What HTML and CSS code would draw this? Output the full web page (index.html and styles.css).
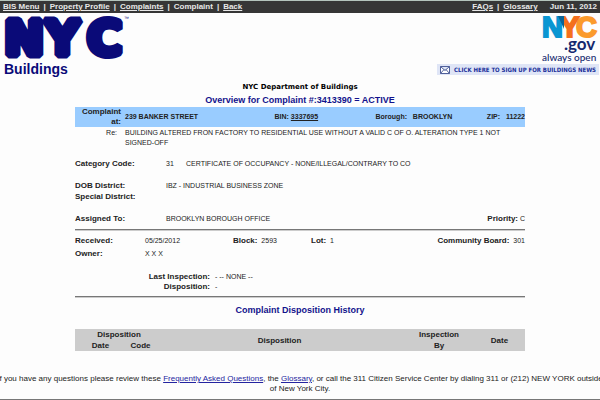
FILE: index.html
```html
<!DOCTYPE html>
<html lang="en">
<head>
    <meta charset="UTF-8">
    <meta name="viewport" content="width=device-width, initial-scale=1.0">
    <title>Overview for Complaint</title>
    <link rel="stylesheet" href="styles.css">
</head>
<body>

    <!-- Top navigation -->
    <nav class="topbar">
        <div class="links">
            <a href="#">BIS Menu</a><span>|</span><a href="#">Property Profile</a><span>|</span><a href="#">Complaints</a><span>|</span>Complaint<span>|</span><a href="#">Back</a>
        </div>
        <div class="links">
            <a href="#">FAQs</a><span>|</span><a href="#">Glossary</a>
            <time class="today">Jun 11, 2012</time>
        </div>
    </nav>

    <header class="banner">
        <svg class="logo" width="130" height="64" viewBox="0 0 130 64" role="img" aria-label="NYC Buildings">
            <text class="logo-nyc" y="40"><tspan x="2">N</tspan><tspan x="43">Y</tspan><tspan x="85">C</tspan></text>
            <text class="logo-tm" x="122" y="5">™</text>
            <text class="logo-dept" x="2" y="59">Buildings</text>
        </svg>
        <div class="banner-right">
            <svg class="gov" width="58" height="49" viewBox="0 0 58 49" role="img" aria-label="NYC.gov always open">
                <text class="gov-nyc" y="22"><tspan class="n" x="1">N</tspan><tspan class="c" x="35">C</tspan><tspan class="y" x="19">Y</tspan></text>
                <polygon class="fold" points="17,1 23,1 23,14" />
                <text class="gov-name" x="23" y="35">.gov</text>
                <text class="gov-open" x="1" y="46">always open</text>
            </svg>
            <a class="signup" href="#">
                <svg width="10" height="8" viewBox="0 0 10 8">
                    <path d="M.5 .5h9v7h-9zM.5 .5l4.500 4 4.500-4M.5 7.500l3.500-4M9.500 7.500l-3.500-4" />
                </svg>
                CLICK HERE TO SIGN UP FOR BUILDINGS NEWS
            </a>
        </div>
    </header>

    <main class="content">
        <div class="dept">NYC Department of Buildings</div>
        <h1>Overview for Complaint #:3413390 = ACTIVE</h1>

        <div class="address">
            <b class="lbl">Complaint at:</b>
            <b>239 BANKER STREET</b>
            <b>BIN: <a href="#">3337695</a></b>
            <b>Borough: &nbsp; BROOKLYN</b>
            <b class="right">ZIP: &nbsp; 11222</b>
        </div>
        <div class="re">
            <span class="lbl">Re:</span>
            <span>BUILDING ALTERED FRON FACTORY TO RESIDENTIAL USE WITHOUT A VALID C OF O. ALTERATION TYPE 1 NOT SIGNED-OFF</span>
        </div>

        <div class="row category">
            <b>Category Code:</b>
            <span class="code">31</span>
            <span>CERTIFICATE OF OCCUPANCY - NONE/ILLEGAL/CONTRARY TO CO</span>
        </div>
        <div class="row">
            <b>DOB District:</b>
            <span>IBZ - INDUSTRIAL BUSINESS ZONE</span>
        </div>
        <div class="row">
            <b>Special District:</b>
        </div>
        <div class="row assigned">
            <b>Assigned To:</b>
            <span>BROOKLYN BOROUGH OFFICE</span>
            <span class="push"><b>Priority:</b> C</span>
        </div>

        <hr>

        <!-- Dates and location -->
        <div class="facts">
            <b>Received:</b>
            <span>05/25/2012</span>
            <span><b>Block:</b>&nbsp; 2593</span>
            <span><b>Lot:</b>&nbsp; 1</span>
            <span class="right"><b>Community Board:</b>&nbsp; 301</span>
            <b>Owner:</b>
            <span>X X X</span>
        </div>
        <div class="inspection">
            <b>Last Inspection:</b>
            <span>- -- NONE --</span>
            <b>Disposition:</b>
            <span>-</span>
        </div>

        <hr>

        <h2>Complaint Disposition History</h2>
        <table class="history">
            <thead>
                <tr>
                    <th colspan="2" class="group">Disposition</th>
                    <th rowspan="2">Disposition</th>
                    <th rowspan="2" class="by">Inspection<br>By</th>
                    <th rowspan="2" class="date">Date</th>
                </tr>
                <tr>
                    <th class="sub-date">Date</th>
                    <th class="sub-code">Code</th>
                </tr>
            </thead>
        </table>
    </main>

    <footer>
        <p>If you have any questions please review these <a href="#">Frequently Asked Questions</a>, the <a href="#">Glossary</a>, or call the 311 Citizen Service Center by dialing 311 or (212) NEW YORK outside<br>of New York City.</p>
        <hr>
    </footer>

</body>
</html>
```

FILE: styles.css
```css
body {
    margin: 0;
    background-color: #fdfdfd;
    color: #222;
    font-family: "Liberation Sans", Arial, sans-serif;
    font-size: 8px;
    line-height: 10px;
    overflow-x: hidden;
}
.topbar {
    display: flex;
    justify-content: space-between;
    padding: 1px 3px;
    border-top: 1px solid #b4c4bc;
    background-color: #363636;
    color: #e8e8e8;
    font-weight: bold;
}
.topbar a {
    color: #e8e8e8;
}
.links span {
    margin: 0 4px;
}
.today {
    margin-left: 10px;
}

/* Logos */
.banner {
    display: flex;
    justify-content: space-between;
    height: 66px;
    padding: 2px 1px 0 2px;
}
.logo, .gov {
    overflow: visible;
}
.logo-nyc {
    font: bold 48px "DejaVu Sans", sans-serif;
    fill: #0a0a78;
    stroke: #0a0a78;
    stroke-width: 7px;
    stroke-linejoin: bevel;
}
.logo-tm {
    font: 5px "Liberation Sans", sans-serif;
    fill: #0a0a78;
}
.logo-dept {
    font: bold 14px "Liberation Sans", sans-serif;
    fill: #0a0a78;
}
.banner-right {
    display: flex;
    flex-direction: column;
    align-items: flex-end;
}
.gov-nyc {
    font: bold 29px "Liberation Sans", sans-serif;
    stroke-width: 2px;
}
.n {
    fill: #0a96d2;
    stroke: #0a96d2;
}
.y {
    fill: #f4701c;
    stroke: #f4701c;
}
.c {
    fill: #fb9a2c;
    stroke: #fb9a2c;
}
.fold {
    fill: #0a6496;
}
.gov-name {
    font: bold 17px Lato, sans-serif;
    fill: #14286e;
}
.gov-open {
    font: 500 10px Lato, sans-serif;
    fill: #14286e;
}
.signup {
    display: flex;
    align-items: center;
    gap: 4px;
    padding: 0 3px;
    background-color: #dfe5f6;
    color: #20309a;
    font: bold 6px/11px "DejaVu Sans Condensed", "DejaVu Sans", sans-serif;
    text-decoration: none;
    white-space: nowrap;
}
.signup path {
    fill: #fff;
    stroke: #50609a;
    stroke-width: 1px;
}

/* Complaint details */
.content {
    width: 75%;
    margin: 0 auto;
    font-size: 7px;
}
.content b {
    font-size: 8px;
}
.dept {
    color: #000;
    font: bold 7px/12px "DejaVu Sans", sans-serif;
    text-align: center;
}
h1, h2 {
    margin: 0;
    color: #12128c;
    font-size: 9px;
    line-height: 14px;
    text-align: center;
}
.address {
    display: grid;
    grid-template-columns: 46px 3fr 2fr 2fr 1fr;
    column-gap: 4px;
    align-items: center;
    background-color: #99ccff;
}
.content .address b {
    font-size: 7px;
    white-space: nowrap;
}
.content .address .lbl {
    font-size: 8px;
    white-space: normal;
}
.address a {
    color: #222;
}
.lbl, .right {
    text-align: right;
}
.re {
    display: grid;
    grid-template-columns: 42px 385px;
    column-gap: 8px;
    padding: 1px 0 5px;
}
.row {
    display: flex;
    line-height: 11px;
}
.row > b {
    width: 91px;
}
.category {
    padding: 5px 0 11px;
}
.code {
    width: 20px;
}
.assigned {
    padding: 11px 0 5px;
}
.push {
    margin-left: auto;
}
hr {
    height: 1px;
    margin: 0;
    border: 0;
    border-top: 1px solid #777;
    background-color: #ccc;
}
.facts {
    display: grid;
    grid-template-columns: 70px 88px 78px 1fr 2fr;
    row-gap: 3px;
    padding: 5px 0 13px;
}
.inspection {
    display: grid;
    grid-template-columns: 135px 1fr;
    column-gap: 5px;
    padding-bottom: 4px;
}
.inspection b {
    text-align: right;
}
h2 {
    padding: 5px 0 12px;
}
.history {
    width: 100%;
    border-collapse: collapse;
    background-color: #ccc;
}
th {
    padding: 0;
    font-size: 8px;
    line-height: 11px;
}
.group {
    padding-left: 8px;
}
.sub-date {
    width: 51px;
}
.sub-code {
    width: 29px;
}
.by {
    width: 70px;
}
.date {
    width: 51px;
}

footer {
    padding-top: 23px;
}
footer p {
    margin: 0 -8px 5px;
    text-align: center;
}
footer a {
    color: #2424a0;
}
```
